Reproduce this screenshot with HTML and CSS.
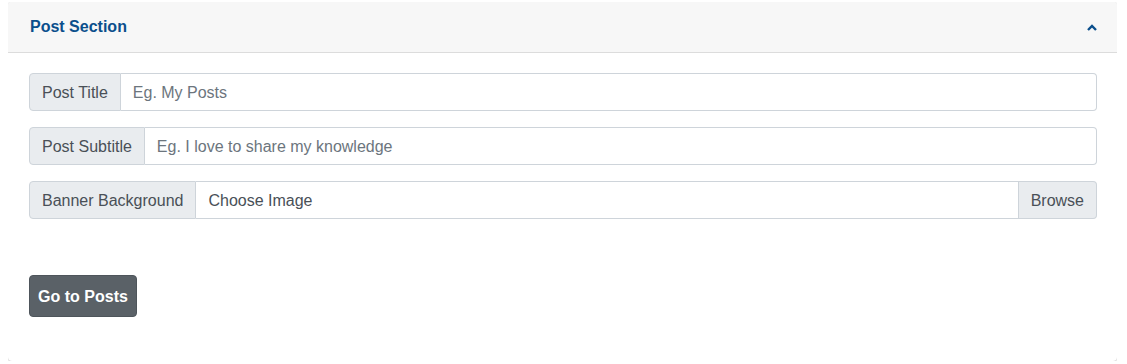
FILE: index.html
```html
<!DOCTYPE html>
<html>
<head>
<meta charset="utf-8">
<link rel="stylesheet" href="styles.css">
</head>
<body>
<div class="card">
  <div class="card-header">
    <h3 class="card-title">Post Section</h3>
    <button class="collapse-btn" aria-label="Collapse">
      <svg width="10" height="7" viewBox="0 0 10 7"><path d="M1 6 L5 2 L9 6" fill="none" stroke="#0b4f8c" stroke-width="2.4"/></svg>
    </button>
  </div>
  <div class="card-body">
    <div class="input-group">
      <span class="addon">Post Title</span>
      <input class="field" type="text" placeholder="Eg. My Posts">
    </div>
    <div class="input-group">
      <span class="addon">Post Subtitle</span>
      <input class="field" type="text" placeholder="Eg. I love to share my knowledge">
    </div>
    <div class="input-group">
      <span class="addon">Banner Background</span>
      <span class="file-label">Choose Image</span>
      <span class="browse">Browse</span>
    </div>
    <div class="actions">
      <button class="btn">Go to Posts</button>
    </div>
  </div>
</div>
</body>
</html>
```
FILE: styles.css
```css
* { box-sizing: border-box; }
body {
  margin: 2px 10px 8px 8px;
  font-family: "Liberation Sans", Arial, sans-serif;
  font-size: 16px;
  line-height: 24px;
  color: #212529;
  background: #fff;
}
.card {
  border-radius: 4px;
  background: #fff;
  box-shadow: 0 0 1px rgba(0,0,0,.125), 0 1px 3px rgba(0,0,0,.2);
}
.card-header {
  display: flex;
  align-items: center;
  justify-content: space-between;
  padding: 13px 20px 13px 22px;
  background: #f7f7f7;
  border-bottom: 1px solid #dcdcdc;
  border-radius: 4px 4px 0 0;
}
.card-title {
  margin: 0;
  font-size: 16px;
  font-weight: bold;
  line-height: 24px;
  color: #0b4f8c;
}
.collapse-btn {
  border: 0;
  background: transparent;
  padding: 0;
  margin-right: 0;
  display: flex;
  align-items: center;
  height: 24px;
}
.card-body {
  padding: 20px 20px 44px 21px;
}
.input-group {
  display: flex;
  height: 38px;
  margin-bottom: 16px;
}
.addon {
  display: flex;
  align-items: center;
  padding: 1px 12px 0;
  background: #e9ecef;
  border: 1px solid #ced4da;
  border-radius: 4px 0 0 4px;
  color: #495057;
  white-space: nowrap;
}
.field {
  flex: 1;
  min-width: 0;
  border: 1px solid #ced4da;
  border-left: 0;
  border-radius: 0 4px 4px 0;
  padding: 1px 12px 0;
  font-family: inherit;
  font-size: 16px;
  color: #495057;
  outline: none;
}
.field::placeholder { color: #6c757d; }
.file-label {
  flex: 1;
  display: flex;
  align-items: center;
  padding: 1px 12px 0;
  border: 1px solid #ced4da;
  border-left: 0;
  color: #495057;
}
.browse {
  display: flex;
  align-items: center;
  padding: 1px 12px 0;
  background: #e9ecef;
  border: 1px solid #ced4da;
  border-left: 0;
  border-radius: 0 4px 4px 0;
  color: #495057;
}
.actions {
  margin-top: 56px;
}
.btn {
  display: block;
  font-family: inherit;
  font-size: 16px;
  font-weight: bold;
  line-height: 24px;
  color: #fff;
  background: #5a6167;
  border: 1px solid #4e555b;
  border-radius: 4px;
  padding: 9px 8px 7px;
  width: 108px;
  height: 42px;
}
```
